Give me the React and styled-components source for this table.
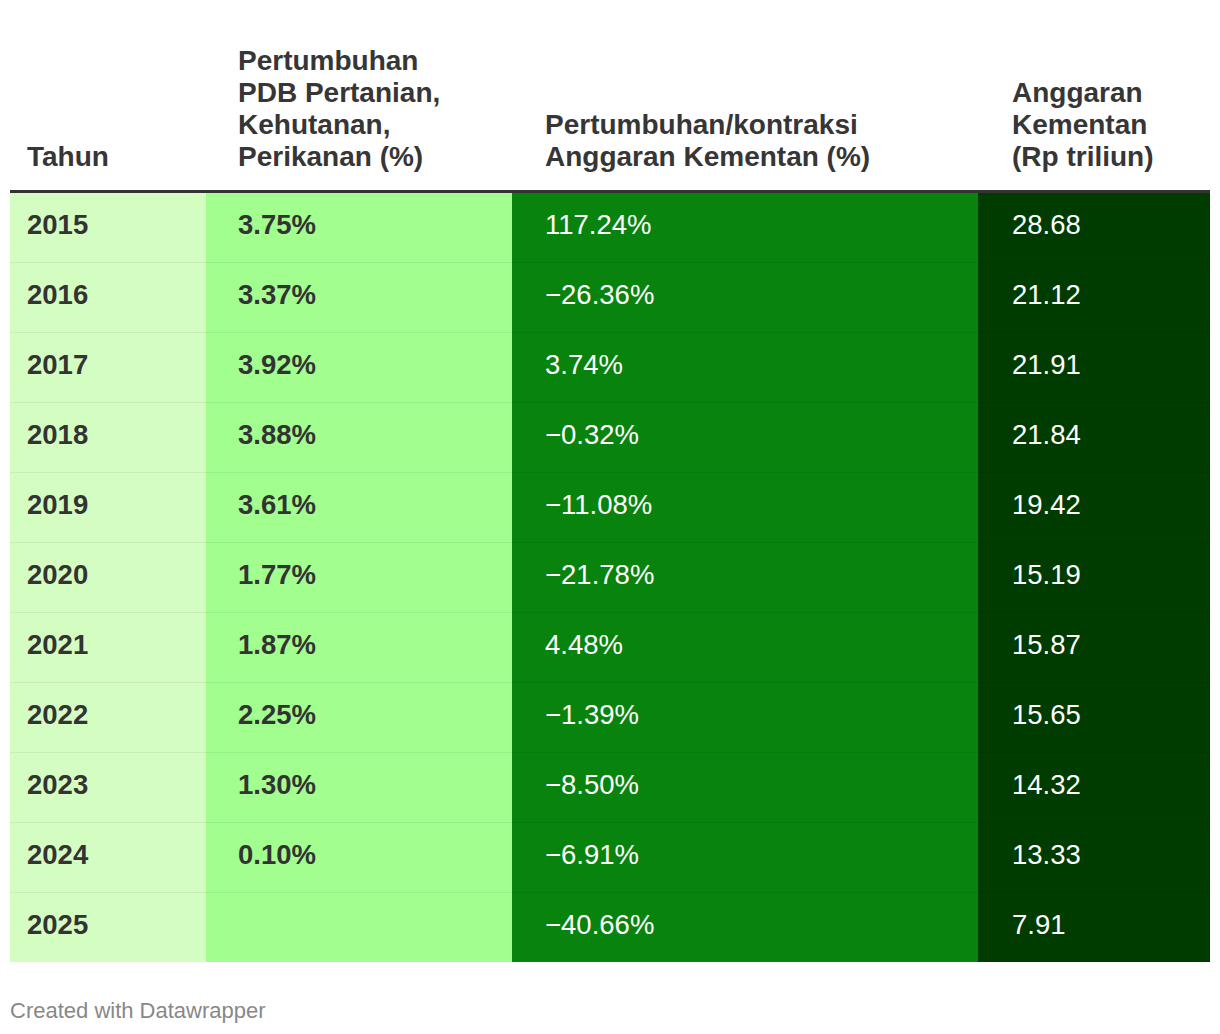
import React from "react";
import styled, { createGlobalStyle } from "styled-components";

const Global = createGlobalStyle`
  html, body { margin: 0; padding: 0; background: #fff; }
  body { font-family: "Liberation Sans", Arial, sans-serif; }
`;

const Page = styled.div`
  width: 1220px;
  padding: 45px 10px 0;
  box-sizing: border-box;
`;

const Table = styled.div`
  display: grid;
  grid-template-columns: 196px 306px 466px 232px;
`;

const HeadCell = styled.div`
  display: flex;
  align-items: flex-end;
  padding: 0 8px 17px ${(p) => p.$pad}px;
  border-bottom: 3px solid #333;
  font-size: 28px;
  line-height: 32px;
  font-weight: 700;
  color: #363636;
`;

const Cell = styled.div`
  height: 70px;
  box-sizing: border-box;
  display: flex;
  align-items: center;
  padding: 0 10px 5px ${(p) => p.$pad}px;
  background: ${(p) => p.$bg};
  color: ${(p) => p.$fg};
  font-size: 27.5px;
  font-weight: ${(p) => p.$weight};
  border-bottom: 1px solid rgba(0, 0, 0, 0.06);
  &:nth-last-child(-n + 4) {
    border-bottom: none;
    height: 69px;
  }
`;

const Footer = styled.div`
  margin-top: 36px;
  font-size: 22px;
  color: #888;
`;

const cols = [
  { pad: 17, bg: "#d4fdc1", fg: "#333", weight: 700 },
  { pad: 32, bg: "#a2fe8f", fg: "#333", weight: 700 },
  { pad: 33, bg: "#08830e", fg: "#fff", weight: 400 },
  { pad: 34, bg: "#003b00", fg: "#fff", weight: 400 },
];

const headers = [
  ["Tahun"],
  ["Pertumbuhan", "PDB Pertanian,", "Kehutanan,", "Perikanan (%)"],
  ["Pertumbuhan/kontraksi", "Anggaran Kementan (%)"],
  ["Anggaran", "Kementan", "(Rp triliun)"],
];

const rows = [
  ["2015", "3.75%", "117.24%", "28.68"],
  ["2016", "3.37%", "\u221226.36%", "21.12"],
  ["2017", "3.92%", "3.74%", "21.91"],
  ["2018", "3.88%", "\u22120.32%", "21.84"],
  ["2019", "3.61%", "\u221211.08%", "19.42"],
  ["2020", "1.77%", "\u221221.78%", "15.19"],
  ["2021", "1.87%", "4.48%", "15.87"],
  ["2022", "2.25%", "\u22121.39%", "15.65"],
  ["2023", "1.30%", "\u22128.50%", "14.32"],
  ["2024", "0.10%", "\u22126.91%", "13.33"],
  ["2025", "", "\u221240.66%", "7.91"],
];

export default function App() {
  return (
    <>
      <Global />
      <Page>
        <Table>
          {headers.map((lines, i) => (
            <HeadCell key={i} $pad={cols[i].pad}>
              <span>
                {lines.map((l, j) => (
                  <React.Fragment key={j}>
                    {j > 0 && <br />}
                    {l}
                  </React.Fragment>
                ))}
              </span>
            </HeadCell>
          ))}
          {rows.map((r) =>
            r.map((v, i) => (
              <Cell
                key={r[0] + i}
                $pad={cols[i].pad}
                $bg={cols[i].bg}
                $fg={cols[i].fg}
                $weight={cols[i].weight}
              >
                {v}
              </Cell>
            ))
          )}
        </Table>
        <Footer>Created with Datawrapper</Footer>
      </Page>
    </>
  );
}
